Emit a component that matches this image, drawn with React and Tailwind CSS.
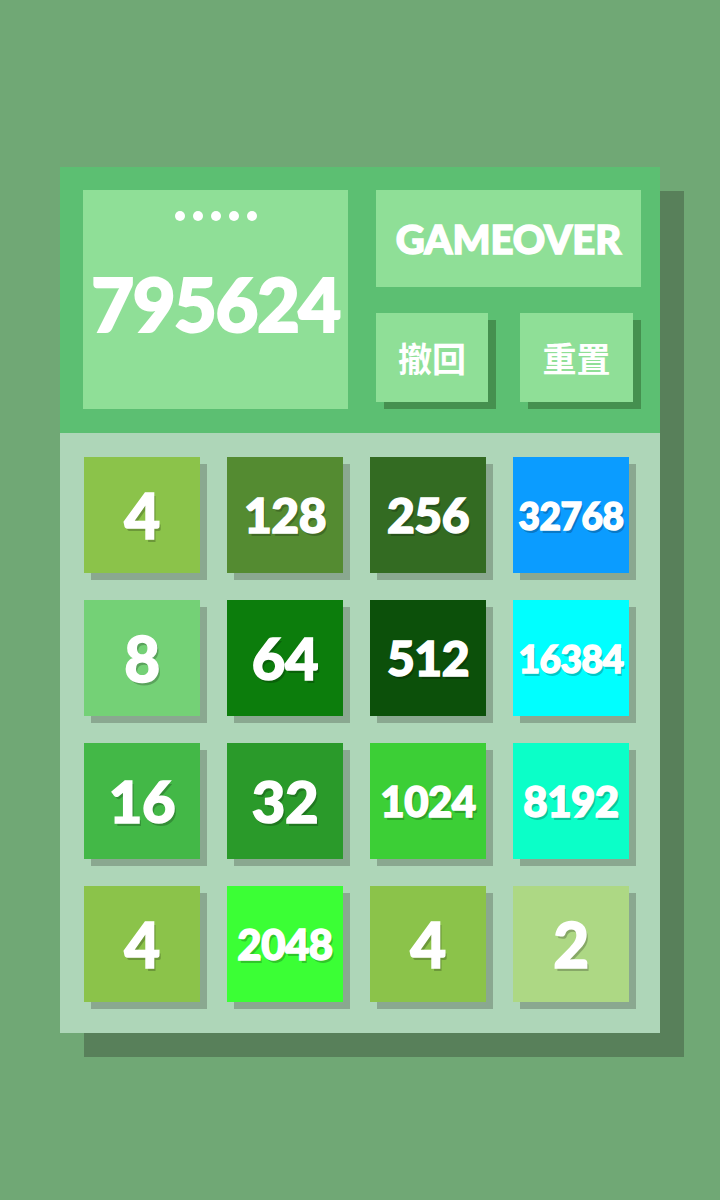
const tiles = [
  [4, 128, 256, 32768],
  [8, 64, 512, 16384],
  [16, 32, 1024, 8192],
  [4, 2048, 4, 2],
]

const tileColors = {
  2: 'bg-[#add884]',
  4: 'bg-[#8bc34a]',
  8: 'bg-[#74d176]',
  16: 'bg-[#43b847]',
  32: 'bg-[#2a9a2a]',
  64: 'bg-[#0c7d0c]',
  128: 'bg-[#548b31]',
  256: 'bg-[#336b22]',
  512: 'bg-[#0c500a]',
  1024: 'bg-[#3ccf36]',
  2048: 'bg-[#3bff35]',
  8192: 'bg-[#0bffc8]',
  16384: 'bg-[#00ffff]',
  32768: 'bg-[#0b9cff]',
}

const sizeByLength = {
  1: 'text-[62px]',
  2: 'text-[58px]',
  3: 'text-[48px]',
  4: 'text-[42px]',
  5: 'text-[37px]',
}

function Tile({ value }) {
  const len = String(value).length
  return (
    <div
      className={`w-[116px] h-[116px] flex items-center justify-center shadow-[7px_7px_0_#8aa890] ${tileColors[value]}`}
    >
      <span
        className={`text-white font-black leading-none tracking-[-0.5px] [-webkit-text-stroke:1.5px_white] [text-shadow:2px_3px_0_rgba(0,0,0,0.22)] ${sizeByLength[len]}`}
      >
        {value}
      </span>
    </div>
  )
}

export default function App() {
  return (
    <div
      className="min-h-[1200px] bg-[#70a875] pt-[167px] pl-[60px]"
      style={{ fontFamily: 'Lato, "Noto Sans CJK SC", sans-serif' }}
    >
      <div className="w-[600px] shadow-[24px_24px_0_#58805a]">
        {/* Header */}
        <div className="h-[266px] bg-[#5cbf72] pt-[23px] pl-[23px] flex">
          <div className="w-[265px] h-[219px] bg-[#8fdf97] flex flex-col items-center">
            <div className="flex gap-[8px] mt-[21px]">
              {[0, 1, 2, 3, 4].map((i) => (
                <div key={i} className="w-[10px] h-[10px] rounded-full bg-white" />
              ))}
            </div>
            <div className="mt-[46px] text-white font-black text-[74px] leading-none tracking-[-1.5px] [-webkit-text-stroke:2px_white]">
              795624
            </div>
          </div>

          <div className="ml-[28px] w-[265px] flex flex-col">
            <div className="h-[97px] bg-[#8fdf97] flex items-center justify-center">
              <span className="text-white font-black text-[40px] leading-none [-webkit-text-stroke:1.5px_white]">
                GAMEOVER
              </span>
            </div>
            <div className="mt-[26px] flex">
              <button className="w-[112px] h-[89px] bg-[#8fdf97] shadow-[8px_7px_0_#45904f] flex items-center justify-center">
                <span
                  className="text-white font-bold text-[34px] leading-none"
                  style={{ fontFamily: '"Noto Sans CJK SC", sans-serif' }}
                >
                  撤回
                </span>
              </button>
              <button className="ml-[32px] w-[113px] h-[89px] bg-[#8fdf97] shadow-[8px_7px_0_#45904f] flex items-center justify-center">
                <span
                  className="text-white font-bold text-[34px] leading-none"
                  style={{ fontFamily: '"Noto Sans CJK SC", sans-serif' }}
                >
                  重置
                </span>
              </button>
            </div>
          </div>
        </div>

        {/* Board */}
        <div className="h-[600px] bg-[#aed6b8] pt-[24px] pl-[24px] grid grid-cols-[repeat(4,116px)] grid-rows-[repeat(4,116px)] gap-[27px]">
          {tiles.flat().map((v, i) => (
            <Tile key={i} value={v} />
          ))}
        </div>
      </div>
    </div>
  )
}
